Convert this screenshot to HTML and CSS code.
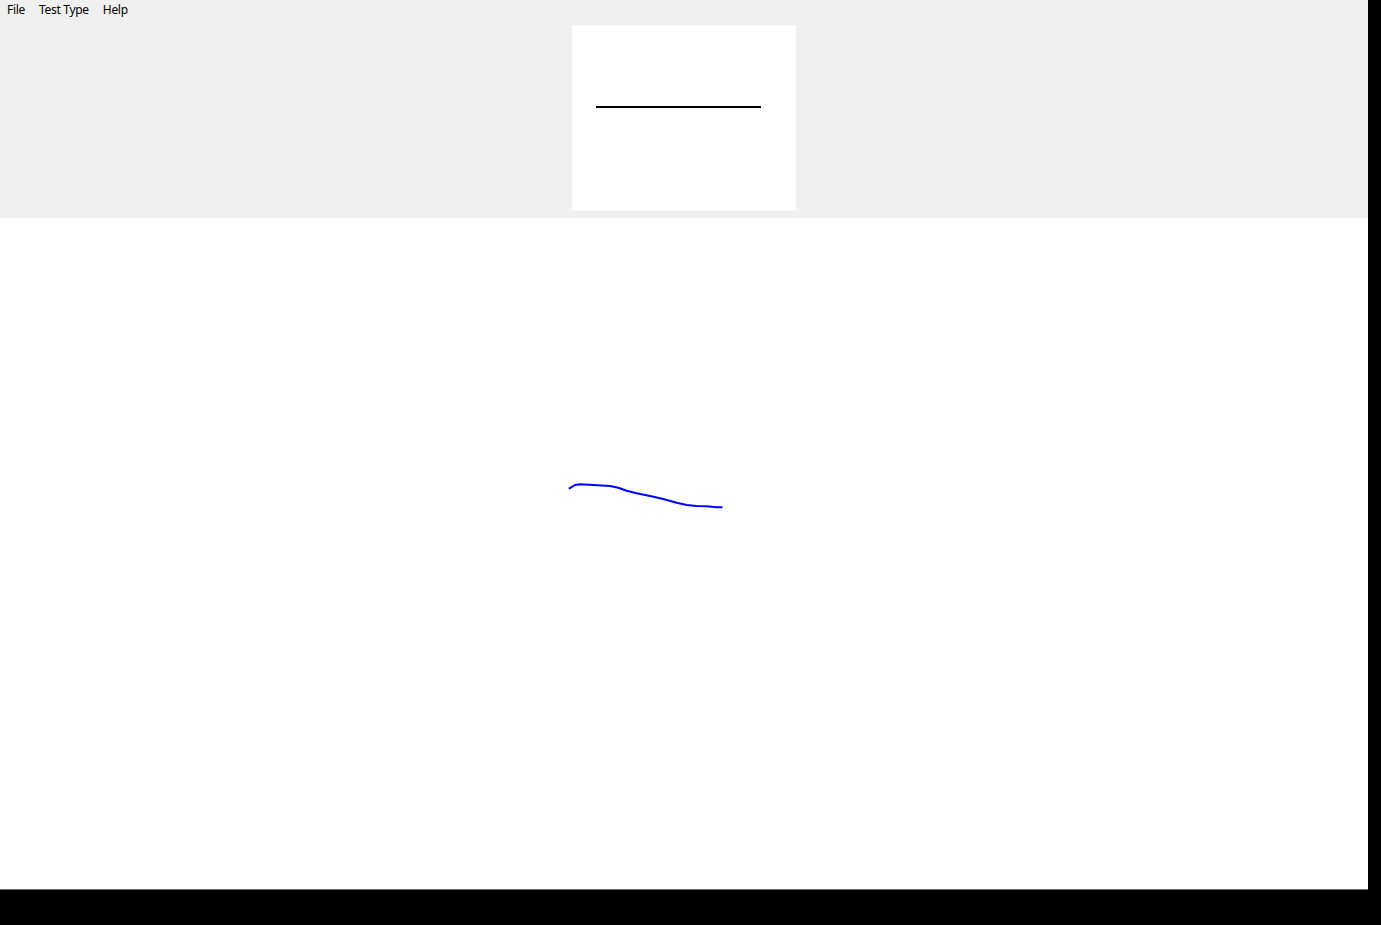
FILE: index.html
```html
<!DOCTYPE html>
<html>
<head>
<meta charset="utf-8">
<link rel="stylesheet" href="styles.css">
</head>
<body>
<div class="app">
  <div class="top">
    <nav class="menubar">
      <span class="menu-item">File</span>
      <span class="menu-item">Test Type</span>
      <span class="menu-item">Help</span>
    </nav>
    <div class="preview-row">
      <div class="preview">
        <div class="target-line"></div>
      </div>
    </div>
  </div>
  <div class="canvas">
    <svg class="ink" width="1368" height="671" viewBox="0 0 1368 671">
      <path d="M569.5 270.3 L575 267 L580 266.3 L593.3 267 L610 268 L618.3 269.7 L626.7 272.7 L636.7 275.3 L650 278 L663.3 281 L676.7 284.7 L686.7 287 L696.7 288 L706.7 288.3 L716.7 289.3 L721.7 289.3" fill="none" stroke="#0000ff" stroke-width="2" stroke-linecap="round" stroke-linejoin="round"/>
    </svg>
  </div>
</div>
</body>
</html>
```
FILE: styles.css
```css
html, body {
  margin: 0;
  padding: 0;
  background: #000;
  width: 1381px;
  height: 925px;
  overflow: hidden;
}
.app {
  width: 1368px;
  height: 890px;
  display: flex;
  flex-direction: column;
  background: #fff;
  font-family: "Noto Sans", "Open Sans", sans-serif;
  font-size: 12px;
  color: #000;
}
.top {
  background: #f0f0f0;
  height: 218px;
  flex-shrink: 0;
  display: flex;
  flex-direction: column;
}
.menubar {
  height: 25px;
  display: flex;
  align-items: flex-start;
  padding-top: 1px;
  box-sizing: border-box;
}
.menu-item {
  padding: 0 7px;
  line-height: 18px;
  letter-spacing: -0.3px;
}
.preview-row {
  display: flex;
  justify-content: center;
}
.preview {
  width: 224px;
  height: 186px;
  background: #fff;
  box-sizing: border-box;
  padding: 81px 0 0 24px;
}
.target-line {
  width: 165px;
  height: 2px;
  background: #000;
}
.canvas {
  flex: 1;
  min-height: 0;
  background: #fff;
  border-bottom: 1px solid #6d6d6d;
}
.ink {
  display: block;
}
```
